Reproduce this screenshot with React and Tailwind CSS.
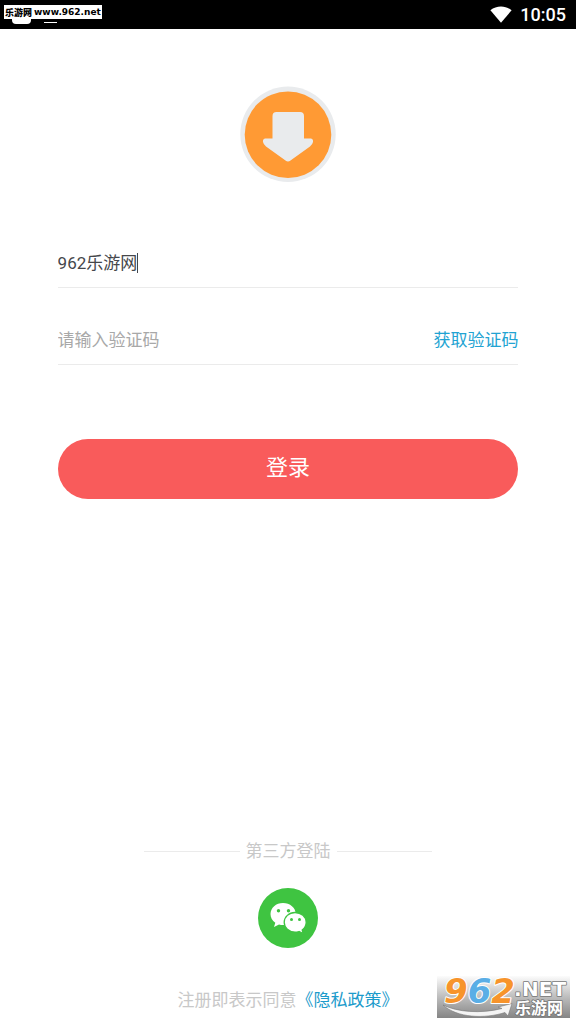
import React from "react";

function StatusBar() {
  return (
    <header className="relative flex h-[29px] items-center justify-end gap-2 bg-black pr-[10px] text-white">
      <div className="absolute left-3 top-[19px] h-[5px] w-[19px] rounded-b-sm bg-white" />
      <div className="absolute left-11 top-[22px] h-px w-[13px] bg-white" />
      <div className="absolute left-1 top-[5px] flex h-[14px] w-[98px] items-center gap-0.5 whitespace-nowrap bg-white pl-px text-black">
        <span className="font-['Noto_Sans_CJK_SC',sans-serif] text-[9px] font-black leading-none">乐游网</span>
        <span className="font-['DejaVu_Sans',sans-serif] text-[9px] font-bold leading-none">www.962.net</span>
      </div>
      <svg viewBox="0 0 22 17" className="h-[17px] w-[22px]" fill="#fff" aria-hidden="true">
        <path d="M.4 4.3C6.5-.7 15.500-.7 21.600 4.300L11 16.800Z" />
      </svg>
      <span className="pt-px font-[Roboto,sans-serif] text-[18px] font-medium leading-none">10:05</span>
    </header>
  );
}

function DownloadLogo() {
  return (
    <svg viewBox="0 0 96 96" className="size-24" role="img" aria-label="下载">
      <circle cx="48" cy="48.300" r="47.700" fill="#e9ebed" />
      <circle cx="48" cy="48.700" r="43.300" fill="#ff9a34" />
      <path
        d="M36.500 26H60Q64 26 64 30V52.500H71Q73.500 53 73 56Q72.500 58.500 70 60.500L50.500 74.500Q48 76.500 45.500 74.500L26 60.500Q23.500 58.500 23 56Q22.500 53 25 52.500H32.500V30Q32.500 26 36.500 26Z"
        fill="#e9ebed"
      />
    </svg>
  );
}

function WeChatIcon() {
  return (
    <svg viewBox="0 0 60 60" className="size-[60px]" aria-hidden="true">
      <circle cx="30" cy="30" r="30" fill="#3fc441" />
      <path
        d="M25 15C18 15 12.500 19.900 12.500 26C12.500 29.700 14.300 32.600 17.300 34.700L16 39L21 36.500Q23 37.100 25 37.100C32 37.100 37.700 32.300 37.700 26S32 15 25 15Z"
        fill="#fff"
      />
      <path
        d="M37 24.500C31 24.500 26.200 28.900 26.200 34.300S31 44.100 37 44.100Q39 44.100 41 43.500L45.200 45.500L44.200 42C46.700 40.100 48.200 37.500 48.200 34.300C48.200 28.900 43.200 24.500 37 24.500Z"
        fill="#fff"
        stroke="#3fc441"
        strokeWidth="1.300"
      />
      <g fill="#3fc441">
        <circle cx="20.500" cy="22.700" r="1.700" />
        <circle cx="30.500" cy="22.700" r="1.700" />
        <circle cx="33.500" cy="31.400" r="1.500" />
        <circle cx="41.500" cy="31.400" r="1.500" />
      </g>
    </svg>
  );
}

function SiteBadge() {
  return (
    <svg
      viewBox="0 0 133 42"
      className="absolute bottom-[6px] right-[6px] h-[42px] w-[133px] overflow-visible"
      role="img"
      aria-label="962.NET 乐游网"
    >
      <defs>
        <linearGradient id="badgeShade" x1="0" y1="0" x2="0" y2="1">
          <stop offset="0" stopColor="#fcfcfc" />
          <stop offset="0.5" stopColor="#bdbdbd" />
          <stop offset="1" stopColor="#858585" />
        </linearGradient>
      </defs>
      <rect width="133" height="42" fill="url(#badgeShade)" />
      <path
        d="M6 29C20 36 44 38 65 32.500L61 31L75 27.500L71 40L68 36.500C48 43 20 42 6 29Z"
        fill="#f4f4f4"
        stroke="#777"
        strokeWidth="0.600"
      />
      <g
        className="font-['DejaVu_Sans',sans-serif] font-bold italic"
        stroke="#fff"
        strokeWidth="2"
        strokeLinejoin="round"
        paintOrder="stroke"
      >
        <text x="7" y="27" fontSize="34" fill="#f7942b">
          9<tspan fill="#5aaee6">6</tspan>2
        </text>
      </g>
      <g fill="#fff" stroke="#777" strokeWidth="1.600" strokeLinejoin="round" paintOrder="stroke">
        <text x="77" y="20" fontSize="20" className="font-['DejaVu_Sans',sans-serif] font-bold">
          .<tspan x="85">NET</tspan>
        </text>
        <text x="78" y="38" fontSize="16" className="font-['Noto_Sans_CJK_SC',sans-serif] font-bold">
          乐游网
        </text>
      </g>
    </svg>
  );
}

export default function App() {
  return (
    <div className="relative flex min-h-screen flex-col bg-white font-[Roboto,'Noto_Sans_CJK_SC',sans-serif] text-[17px] leading-6">
      <StatusBar />
      <main className="flex grow flex-col items-center px-[10%] pb-3 pt-[57px]">
        <DownloadLogo />

        <form className="mt-[58px] w-full" onSubmit={(e) => e.preventDefault()}>
          <div className="flex h-12 items-center border-b border-[#ebebeb] pb-px">
            <input
              type="text"
              aria-label="账号"
              defaultValue="962乐游网"
              className="h-6 min-w-0 field-sizing-content bg-transparent text-[#45474b] outline-none"
            />
            <span className="h-5 w-px bg-[#45474b]" />
          </div>
          <div className="mt-[29px] flex h-12 items-center justify-between border-b border-[#ebebeb] pb-px">
            <input
              type="text"
              aria-label="验证码"
              placeholder="请输入验证码"
              className="h-6 min-w-0 grow bg-transparent text-[#45474b] outline-none placeholder:text-[#a8a8a8]"
            />
            <button type="button" className="shrink-0 text-[#22a3d2]">
              获取验证码
            </button>
          </div>
          <button
            type="submit"
            className="mt-[74px] flex h-[60px] w-full items-center justify-center rounded-full bg-[#f95b5b] pb-0.5 text-[22px] text-white"
          >
            登录
          </button>
        </form>

        <section className="mt-auto flex w-full flex-col items-center">
          <div className="flex w-[288px] items-center gap-[6px] text-[#c8c8c8]">
            <span className="h-px grow bg-[#ebebeb]" />
            <h2>第三方登陆</h2>
            <span className="h-px grow bg-[#ebebeb]" />
          </div>
          <button type="button" aria-label="微信登录" className="mt-[25px] rounded-full">
            <WeChatIcon />
          </button>
          <p className="mt-10 whitespace-nowrap text-[#c8c8c8]">
            注册即表示同意
            <a href="#privacy" className="text-[#1c9bcb]">
              《隐私政策》
            </a>
          </p>
        </section>
      </main>
      <SiteBadge />
    </div>
  );
}
